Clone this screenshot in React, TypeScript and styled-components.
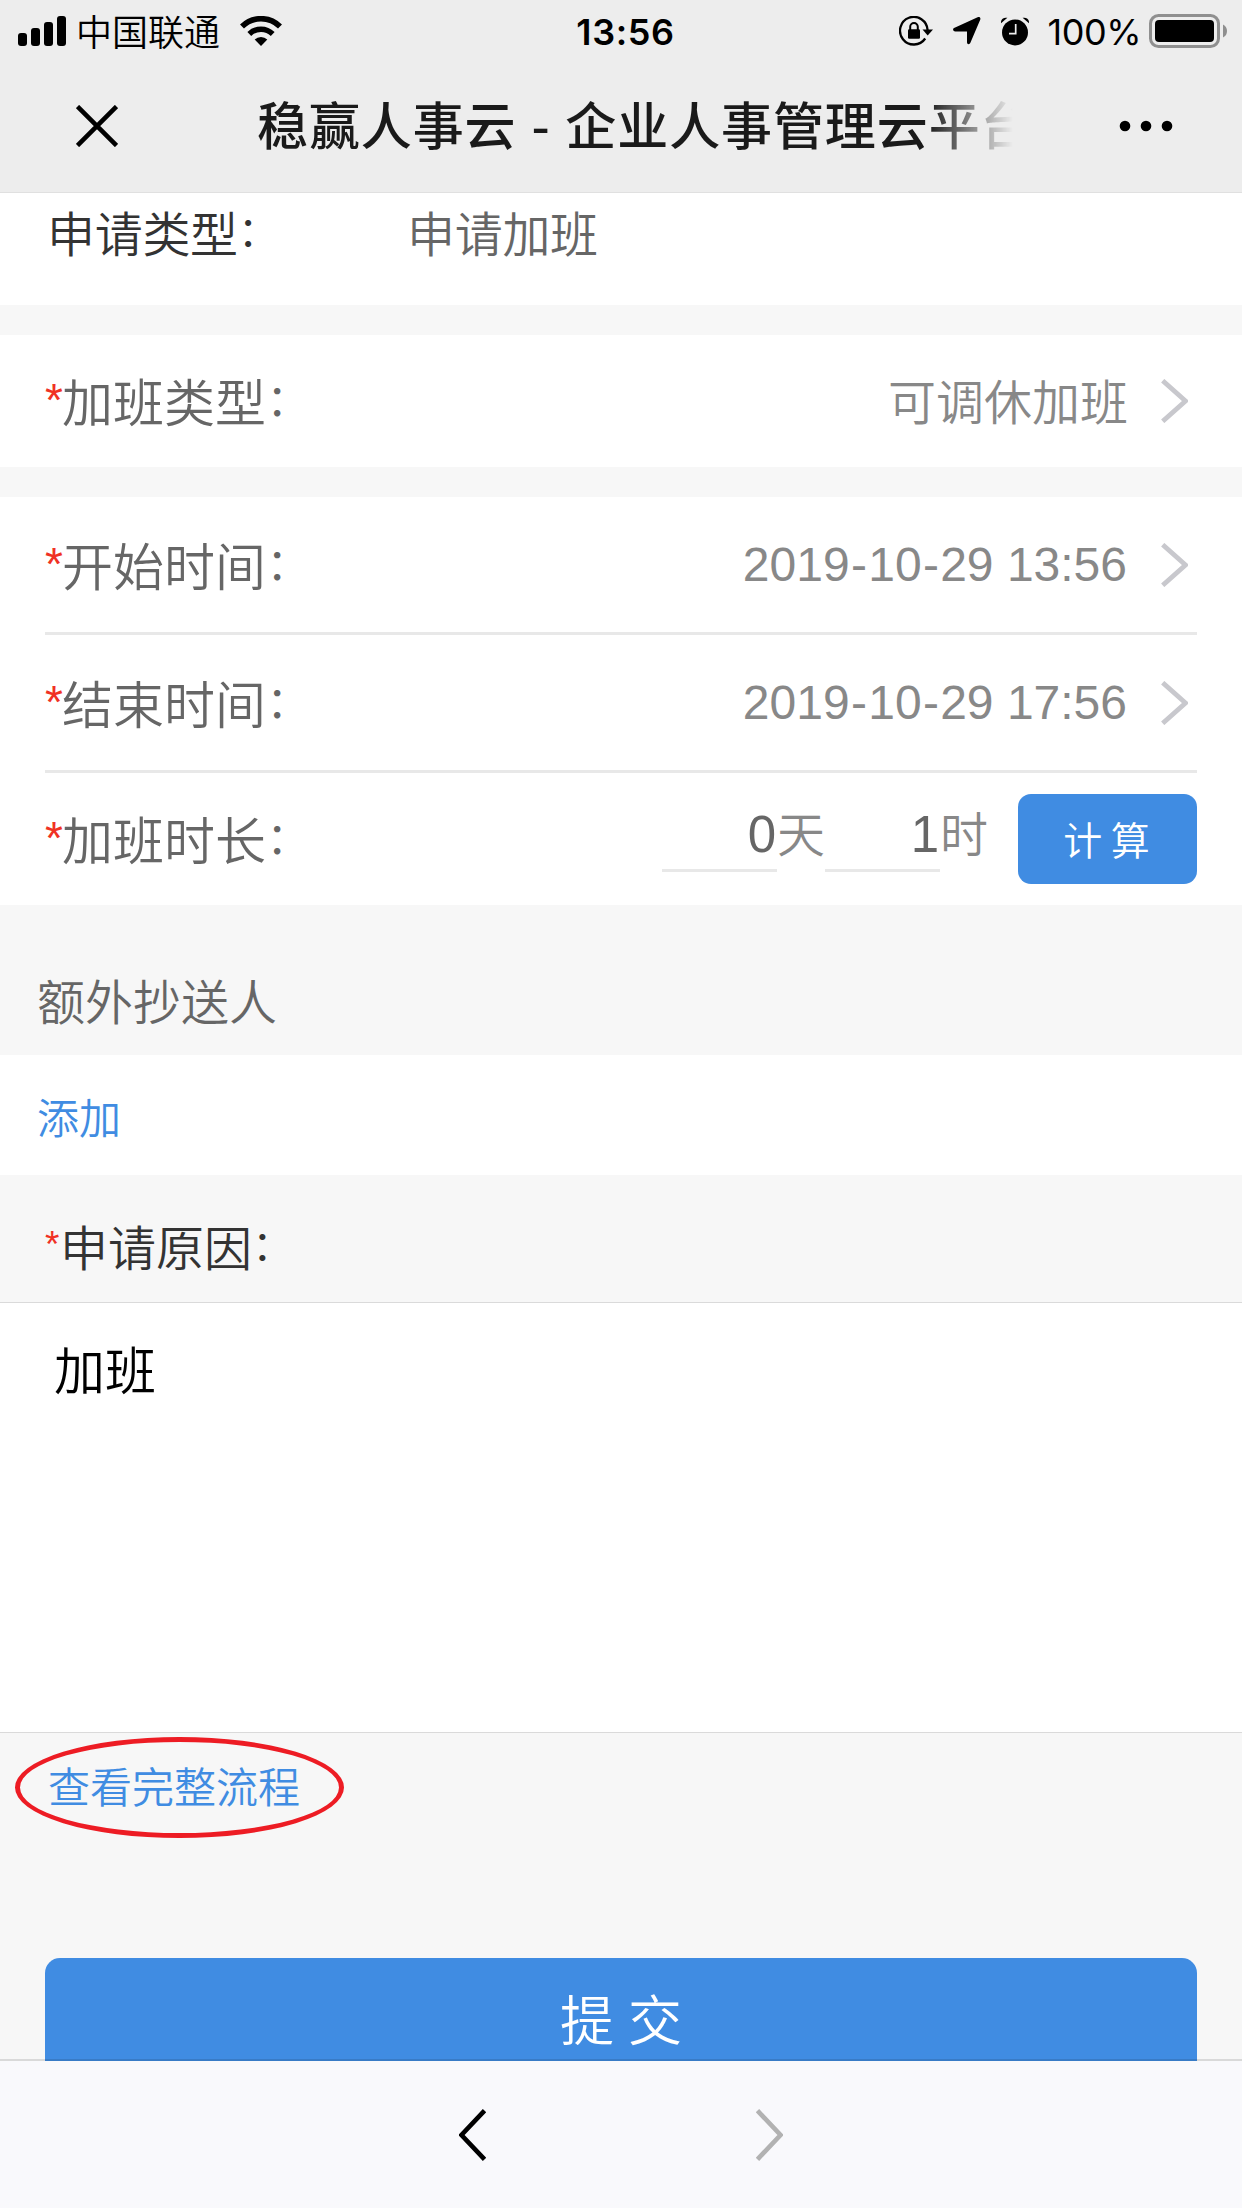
import React from 'react';
import styled, { createGlobalStyle } from 'styled-components';

const cjk = `"Noto Sans CJK SC", "Noto Sans", sans-serif`;
const latin = `"Liberation Sans", "Noto Sans CJK SC", sans-serif`;

const GlobalStyle = createGlobalStyle`
  *, *::before, *::after { box-sizing: border-box; }
  body { margin: 0; background: #f7f7f7; font-family: ${cjk}; }
  svg { display: block; flex: none; }
`;

const Screen = styled.div`
  display: flex;
  flex-direction: column;
  width: 1242px;
  height: 2208px;
  overflow: hidden;
  background: #f7f7f7;
`;

const Header = styled.header`
  flex: none;
  height: 193px;
  background: #ededed;
  border-bottom: 1px solid #e0e0e0;
`;

const StatusBar = styled.div`
  display: grid;
  grid-template-columns: 1fr auto 1fr;
  align-items: center;
  height: 60px;
  padding: 0 15px 0 18px;
  color: #000;
`;

const StatusSide = styled.div<{ $end?: boolean }>`
  display: flex;
  align-items: center;
  justify-content: ${(p) => (p.$end ? 'flex-end' : 'flex-start')};
`;

const StatusIcons = styled.div`
  display: flex;
  align-items: center;
  gap: 20px;
`;

const Carrier = styled.span`
  margin: -3px 20px 0 10px;
  font: 350 36px/56px ${cjk};
`;

const Clock = styled.span`
  font: 600 36px/60px Inter, sans-serif;
  letter-spacing: 0.6px;
  padding: 1px 0 0 6px;
`;

const Percent = styled.span`
  margin: 2px 8px 0 19px;
  font: 400 36px/60px Inter, sans-serif;
  letter-spacing: -0.5px;
`;

const TitleBar = styled.div`
  display: flex;
  align-items: center;
  height: 132px;
  padding: 0 69px 0 76px;
`;

const Title = styled.h1`
  flex: none;
  width: 756px;
  margin: -6px 106px 0 139px;
  overflow: hidden;
  white-space: nowrap;
  font: 500 51px/74px ${cjk};
  letter-spacing: 0.9px;
  word-spacing: 2.5px;
  color: #1a1a1a;
  mask-image: linear-gradient(to right, #000 670px, transparent 756px);
`;

const Form = styled.main`
  flex: 1;
  min-height: 0;
  overflow: hidden;
  display: flex;
  flex-direction: column;
`;

const Panel = styled.section<{ $gap?: number }>`
  flex: none;
  background: #fff;
  padding: 0 45px;
  margin-bottom: ${(p) => p.$gap ?? 30}px;
`;

const TypeRow = styled.div`
  display: grid;
  grid-template-columns: 360px 1fr;
  height: 112px;
  padding: 3px 0 0 2px;
  font-size: 48px;
  line-height: 70px;
  font-weight: 350;
  letter-spacing: -0.3px;
  color: #666;
`;

const Dark = styled.span`
  display: flex;
  color: #333;
`;

const Row = styled.div<{ $h: number; $line?: boolean }>`
  display: flex;
  align-items: center;
  justify-content: space-between;
  height: ${(p) => p.$h}px;
  border-bottom: ${(p) => (p.$line ? '3px solid #e8e8e8' : 'none')};
`;

const Label = styled.label`
  display: flex;
  margin-top: -2px;
  font: 350 51px/74px ${cjk};
  color: #666;
`;

const Star = styled.span<{ $small?: boolean }>`
  flex: none;
  width: ${(p) => (p.$small ? 15 : 17)}px;
  font-family: ${latin};
  font-size: ${(p) => (p.$small ? 37 : 46)}px;
  font-weight: 400;
  color: #f03224;
`;

const Colon = styled.span`
  font-family: "Noto Sans CJK JP", sans-serif;
  font-size: 0.87em;
  font-feature-settings: "halt";
`;

const Picker = styled.div`
  display: flex;
  align-items: center;
  gap: 34px;
  padding-right: 9px;
  font: 350 48px/70px ${cjk};
  color: #888;
`;

const Choice = styled.span`
  margin: -4px -1px 0 0;
`;

const DateText = styled.span`
  font-family: ${latin};
  font-weight: 400;
  white-space: pre;
`;

const Dash = styled.span`
  padding: 0 1.3px;
`;

const Duration = styled.div`
  display: flex;
  align-items: center;
  font: 350 48px/70px ${cjk};
  color: #888;
`;

const Amount = styled.span`
  width: 115px;
  height: 68px;
  margin-top: -2px;
  padding-right: 1px;
  border-bottom: 3px solid #e8e8e8;
  font: 400 51px/62px ${latin};
  text-align: right;
  color: #666;
`;

const Unit = styled.span`
  width: 48px;
  margin-top: -17px;
`;

const CalcButton = styled.button`
  width: 179px;
  height: 90px;
  margin-left: 30px;
  padding: 0 2px 3px 0;
  border: 0;
  border-radius: 13px;
  background: #408ce2;
  color: #fff;
  font: 350 39px/60px ${cjk};
`;

const CopyTitle = styled.h2`
  flex: none;
  height: 150px;
  margin: 0;
  padding: 59px 37px 0;
  font: 350 48px/70px ${cjk};
  color: #666;
`;

const AddRow = styled.div`
  flex: none;
  height: 120px;
  padding: 0 37px;
  background: #fff;
`;

const Link = styled.a`
  font: 350 42px/122px ${cjk};
  color: #408ce2;
`;

const ReasonLabel = styled.div`
  flex: none;
  display: flex;
  height: 127px;
  padding: 35px 45px 0;
  font: 350 48px/70px ${cjk};
  color: #333;
`;

const Reason = styled.div`
  flex: none;
  height: 431px;
  padding: 28px 54px;
  background: #fff;
  border: solid #dadada;
  border-width: 1px 0;
  font: 350 51px/74px ${cjk};
  color: #000;
`;

const FlowRow = styled.div`
  flex: none;
  height: 225px;
  padding: 4px 0 0 15px;
`;

const Circled = styled.div`
  display: flex;
  width: 329px;
  height: 101px;
  padding-left: 28px;
  border: 5px solid #ed1c24;
  border-radius: 50%;
  white-space: nowrap;

  ${Link} { line-height: 86px; }
`;

const Submit = styled.button`
  flex: none;
  height: 129px;
  margin: 0 45px;
  padding: 0 0 10px 0;
  border: 0;
  border-radius: 15px;
  background: #408ce2;
  color: #fff;
  font: 350 54px/80px ${cjk};
  word-spacing: 2px;
`;

const Footer = styled.footer`
  flex: none;
  display: flex;
  justify-content: center;
  gap: 270px;
  height: 149px;
  margin-top: -2px;
  padding-top: 48px;
  background: #f9f9fc;
  background-clip: padding-box;
  border-top: 2px solid rgba(0, 0, 0, 0.12);
  position: relative;
`;

const Signal = () => (
  <svg width="48" height="30" viewBox="0 0 48 30">
    <rect x="0" y="17" width="9" height="13" rx="3" />
    <rect x="13" y="12" width="9" height="18" rx="3" />
    <rect x="26" y="6" width="9" height="24" rx="3" />
    <rect x="39" y="0" width="9" height="30" rx="3" />
  </svg>
);

const Wifi = () => (
  <svg width="42" height="30" viewBox="0 0 42 30">
    <path d="M2 10.5a27 27 0 0 1 38 0" fill="none" stroke="#000" strokeWidth="5.6" />
    <path d="M9.3 18a16.6 16.6 0 0 1 23.4 0" fill="none" stroke="#000" strokeWidth="5.4" />
    <path d="M14.7 23.5a9 9 0 0 1 12.6 0L21 30z" />
  </svg>
);

const RotationLock = () => (
  <svg width="34" height="30" viewBox="0 0 34 30">
    <path d="M26.2 22.5A13.8 13.8 0 1 1 28.6 14" fill="none" stroke="#000" strokeWidth="2.3" />
    <path d="M23.5 13.5H34L28.7 19.5z" />
    <rect x="9" y="13.3" width="12" height="9.5" rx="1.2" />
    <path d="M11.2 14v-3.2a3.8 3.8 0 0 1 7.6 0V14" fill="none" stroke="#000" strokeWidth="2" />
  </svg>
);

const Location = () => (
  <svg width="28" height="28" viewBox="0 0 28 28">
    <path d="M24.6.3C26.5-.5 28 .8 27.2 2.8L17.4 25.8c-.8 2-3.4 1.8-3.4-.6V14.4H2.3c-2.6 0-3-2.8-.7-3.7z" />
  </svg>
);

const Alarm = () => (
  <svg width="28" height="29" viewBox="0 0 28 29">
    <circle cx="14" cy="15.4" r="13" />
    <path d="M0 6.2C-.4 1.5 3 .1 6.4.8zM28 6.2C28.4 1.5 25 .1 21.6.8z" />
    <path d="M14.7 7v9.7H8" fill="none" stroke="#ededed" strokeWidth="1.7" />
  </svg>
);

const Battery = () => (
  <svg width="78" height="34" viewBox="0 0 78 34">
    <rect x="1.5" y="1.5" width="68" height="31" rx="8" fill="none" stroke="#8f8f8f" strokeWidth="3" />
    <rect x="6" y="6" width="59" height="22" rx="4" />
    <path d="M74 10.5q4 2 4 6.5t-4 6.5z" fill="#8f8f8f" />
  </svg>
);

const Chevron = () => (
  <svg width="27" height="44" viewBox="0 0 27 44">
    <path d="M1.7 1.7 24.5 22 1.7 42.3" fill="none" stroke="#c8c8cd" strokeWidth="4.8" />
  </svg>
);

const NavArrow = ({ back }: { back?: boolean }) => (
  <svg width="27" height="52" viewBox="0 0 27 52">
    <path
      d={back ? 'M25.5 1.7 2.5 26l23 24.3' : 'M1.5 1.7 24.5 26l-23 24.3'}
      fill="none"
      stroke={back ? '#000' : '#b2b2b2'}
      strokeWidth="4.6"
    />
  </svg>
);

const FieldLabel = ({ text }: { text: string }) => (
  <Label>
    <Star>*</Star>
    {text}
    <Colon>：</Colon>
  </Label>
);

const DateValue = ({ value }: { value: string }) => (
  <DateText>
    {value.split('-').map((part, i) => (
      <React.Fragment key={i}>
        {i > 0 && <Dash>-</Dash>}
        {part}
      </React.Fragment>
    ))}
  </DateText>
);

export default function App() {
  return (
    <Screen>
      <GlobalStyle />
      <Header>
        <StatusBar>
          <StatusSide>
            <Signal />
            <Carrier>中国联通</Carrier>
            <Wifi />
          </StatusSide>
          <Clock>13:56</Clock>
          <StatusSide $end>
            <StatusIcons>
              <RotationLock />
              <Location />
              <Alarm />
            </StatusIcons>
            <Percent>100%</Percent>
            <Battery />
          </StatusSide>
        </StatusBar>
        <TitleBar>
          <svg width="42" height="42" viewBox="0 0 42 42">
            <path d="M1.5 1.5l39 39M40.5 1.5l-39 39" stroke="#000" strokeWidth="4.6" />
          </svg>
          <Title>稳赢人事云 - 企业人事管理云平台</Title>
          <svg width="54" height="12" viewBox="0 0 54 12">
            <circle cx="6" cy="6" r="5.3" />
            <circle cx="27" cy="6" r="5.3" />
            <circle cx="48" cy="6" r="5.3" />
          </svg>
        </TitleBar>
      </Header>

      <Form>
        <Panel>
          <TypeRow>
            <Dark>
              申请类型<Colon>：</Colon>
            </Dark>
            <span>申请加班</span>
          </TypeRow>
        </Panel>
        <Panel>
          <Row $h={132}>
            <FieldLabel text="加班类型" />
            <Picker>
              <Choice>可调休加班</Choice>
              <Chevron />
            </Picker>
          </Row>
        </Panel>
        <Panel $gap={0}>
          <Row $h={138} $line>
            <FieldLabel text="开始时间" />
            <Picker>
              <DateValue value="2019-10-29 13:56" />
              <Chevron />
            </Picker>
          </Row>
          <Row $h={138} $line>
            <FieldLabel text="结束时间" />
            <Picker>
              <DateValue value="2019-10-29 17:56" />
              <Chevron />
            </Picker>
          </Row>
          <Row $h={132}>
            <FieldLabel text="加班时长" />
            <Duration>
              <Amount>0</Amount>
              <Unit>天</Unit>
              <Amount>1</Amount>
              <Unit>时</Unit>
              <CalcButton>计 算</CalcButton>
            </Duration>
          </Row>
        </Panel>
        <CopyTitle>额外抄送人</CopyTitle>
        <AddRow>
          <Link>添加</Link>
        </AddRow>
        <ReasonLabel>
          <Star $small>*</Star>
          <span>申请原因</span>
          <Colon>：</Colon>
        </ReasonLabel>
        <Reason>加班</Reason>
        <FlowRow>
          <Circled>
            <Link>查看完整流程</Link>
          </Circled>
        </FlowRow>
        <Submit>提 交</Submit>
      </Form>

      <Footer>
        <NavArrow back />
        <NavArrow />
      </Footer>
    </Screen>
  );
}
